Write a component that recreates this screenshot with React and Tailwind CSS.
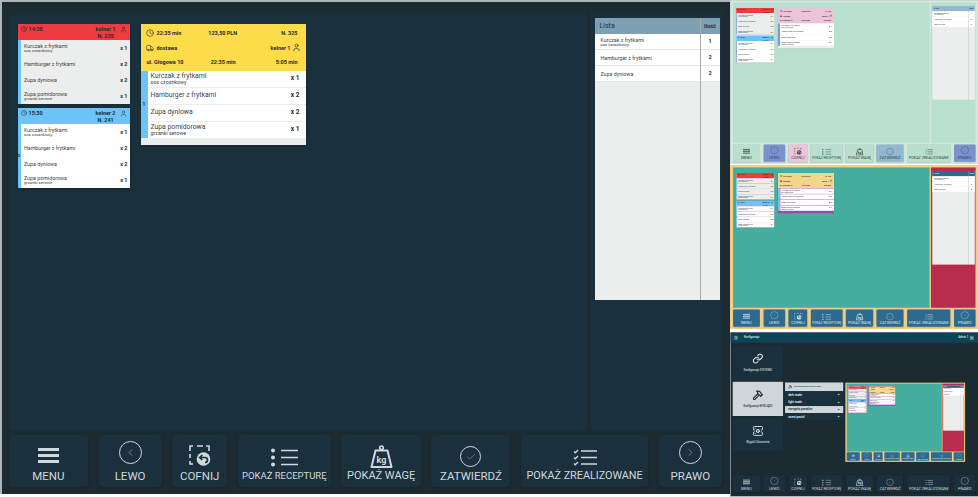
import { Clock, User, Truck, Link, Hammer, ServerCog, Settings, ChevronLeft, ChevronRight, Check } from 'lucide-react';

const darkTheme = {
  root: 'bg-[#1c2a32] border-[#aeb6ba]',
  topStrip: 'bg-[#1c2c35]',
  listStrip: 'bg-[#1c2c35]',
  panel: 'bg-[#1b303d]',
  listPanel: 'bg-[#1b303d]',
  text: 'text-[#d0d9de]',
  undoArrow: '#1b303d',
  btn: ['bg-[#1b303d]', 'bg-[#1b303d]', 'bg-[#1b303d]', 'bg-[#1b303d]', 'bg-[#1b303d]', 'bg-[#1b303d]', 'bg-[#1b303d]', 'bg-[#1b303d]'],
  bigHead: 'bg-[#fddc4a]',
  bigBottom: 'bg-[#eceeed]',
  strip: 'bg-[#6cc3f5]',
  gap: 'bg-[#eceeed]',
  listHead: 'bg-[#7f9fb3] text-[#1f2f38]',
};

const mintTheme = {
  root: 'bg-[#d3e8dd] border-[#c4cfc9]',
  topStrip: 'bg-[#b9e0cf]',
  listStrip: 'bg-[#b9e0cf]',
  panel: 'bg-[#b9e0cf]',
  listPanel: 'bg-[#b9e0cf]',
  text: 'text-[#34454d]',
  undoArrow: '#ecc3d8',
  btn: ['bg-[#b9e0cf]', 'bg-[#7b92cf]', 'bg-[#ecc3d8]', 'bg-[#b9e0cf]', 'bg-[#b9e0cf]', 'bg-[#92b9d0]', 'bg-[#b9e0cf]', 'bg-[#7b92cf]'],
  bigHead: 'bg-[#ecc3d8]',
  bigBottom: 'bg-[#eceeed]',
  strip: 'bg-[#7f9bd0]',
  gap: 'bg-[#eceeed]',
  listHead: 'bg-[#92b9d0] text-[#1f2f38]',
};

const energyTheme = {
  root: 'bg-[#f0cf85] border-[#f0cf85]',
  topStrip: 'bg-[#46ae9f]',
  listStrip: 'bg-[#b82c4e]',
  panel: 'bg-[#46ae9f]',
  listPanel: 'bg-[#b82c4e]',
  text: 'text-[#dbe8ee]',
  undoArrow: '#2c6a8f',
  btn: ['bg-[#2c6a8f]', 'bg-[#2c6a8f]', 'bg-[#2c6a8f]', 'bg-[#2c6a8f]', 'bg-[#2c6a8f]', 'bg-[#2c6a8f]', 'bg-[#2c6a8f]', 'bg-[#2c6a8f]'],
  bigHead: 'bg-[#f4d58a]',
  bigBottom: 'bg-[#a544b8]',
  strip: 'bg-[#6cc3f5]',
  gap: 'bg-[#a544b8]',
  listHead: 'bg-[#2c6a8f] text-[#e5eef2]',
};

const itemsA = [
  { name: 'Kurczak z frytkami', note: 'sos czosnkowy', qty: 'x 1' },
  { name: 'Hamburger z frytkami', qty: 'x 2' },
  { name: 'Zupa dyniowa', qty: 'x 2' },
  { name: 'Zupa pomidorowa', note: 'grzanki serowe', qty: 'x 1' },
];

function MenuIcon() {
  return (
    <svg width="21" height="15" viewBox="0 0 21 15" fill="currentColor">
      <rect y="0" width="21" height="3" />
      <rect y="6" width="21" height="3" />
      <rect y="12" width="21" height="3" />
    </svg>
  );
}

function UndoIcon({ arrow }) {
  return (
    <svg width="22" height="21" viewBox="0 0 22 21" fill="none" stroke="currentColor">
      <path d="M1 6V1h3M8 1h6M17 1h3v5M1 9v4M1 16v3h3" strokeWidth="1.6" />
      <circle cx="14.5" cy="14" r="6.8" fill="currentColor" stroke="none" />
      <path d="M11 12.5h5a2.5 2.5 0 0 1 0 5M13.3 10l-2.6 2.5 2.6 2.5" stroke={arrow} strokeWidth="1.7" />
    </svg>
  );
}

function ListIcon() {
  return (
    <svg width="27" height="19" viewBox="0 0 27 19" fill="none" stroke="currentColor">
      <circle cx="2" cy="2.5" r="2" fill="currentColor" stroke="none" />
      <circle cx="2" cy="9.5" r="2" fill="currentColor" stroke="none" />
      <circle cx="2" cy="16.5" r="2" fill="currentColor" stroke="none" />
      <path d="M10 2.5h17M10 9.5h17M10 16.5h17" strokeWidth="1.4" />
    </svg>
  );
}

function WeightIcon() {
  return (
    <svg width="23" height="23" viewBox="0 0 23 23" fill="none" stroke="currentColor">
      <circle cx="11.5" cy="2.8" r="1.8" strokeWidth="1.6" />
      <path d="M5.5 5.5h12l4 16.5H1.5z" strokeWidth="2" strokeLinejoin="round" />
      <text x="11.5" y="17.5" textAnchor="middle" fontSize="9" fontWeight="700" fill="currentColor" stroke="none" fontFamily="Roboto, sans-serif">kg</text>
    </svg>
  );
}

function CheckListIcon() {
  return (
    <svg width="24" height="17" viewBox="0 0 24 17" fill="none" stroke="currentColor">
      <path d="M1 2.5l1.3 1.3L5 1M1 8.5l1.3 1.3L5 7M1 14.5l1.3 1.3L5 13" strokeWidth="1.3" />
      <path d="M8 2h16M8 8.5h16M8 15h16" strokeWidth="1.5" />
    </svg>
  );
}

function RoundIcon({ size, children }) {
  return (
    <div className={`flex ${size} items-center justify-center rounded-full border border-current`}>
      {children}
    </div>
  );
}

function BottomBar({ theme }) {
  const items = [
    { w: 'w-[79.5px]', pt: 'pt-[13px]', label: 'MENU', size: 'text-[11.5px]', icon: <MenuIcon /> },
    { w: 'w-[63px]', pt: 'pt-[6px]', label: 'LEWO', size: 'text-[11.5px]', icon: <RoundIcon size="h-[23px] w-[23px]"><ChevronLeft size={11} strokeWidth={1} /></RoundIcon> },
    { w: 'w-[55px]', pt: 'pt-[10px]', label: 'COFNIJ', size: 'text-[11.5px]', icon: <UndoIcon arrow={theme.undoArrow} /> },
    { w: 'w-[93px]', pt: 'pt-[13px]', label: 'POKAŻ RECEPTURĘ', size: 'text-[9.5px]', icon: <ListIcon /> },
    { w: 'w-[79.5px]', pt: 'pt-[10px]', label: 'POKAŻ WAGĘ', size: 'text-[11px]', icon: <WeightIcon /> },
    { w: 'w-[79px]', pt: 'pt-[11px]', label: 'ZATWIERDŹ', size: 'text-[11.5px]', icon: <RoundIcon size="h-[21px] w-[21px]"><Check size={10} strokeWidth={1} /></RoundIcon> },
    { w: 'w-[127px]', pt: 'pt-[14px]', label: 'POKAŻ ZREALIZOWANE', size: 'text-[10.8px]', icon: <CheckListIcon /> },
    { w: 'w-[63.5px]', pt: 'pt-[6px]', label: 'PRAWO', size: 'text-[11.5px]', icon: <RoundIcon size="h-[23px] w-[23px]"><ChevronRight size={11} strokeWidth={1} /></RoundIcon> },
  ];
  return (
    <div className={`flex h-[52px] gap-[10.6px] ${theme.text}`}>
      {items.map((b, i) => (
        <div key={b.label} className={`${b.w} ${theme.btn[i]} flex flex-col items-center rounded-sm pb-[4px] shadow-sm`}>
          <div className={`flex h-[34px] justify-center ${b.pt}`}>
            <div>{b.icon}</div>
          </div>
          <div className={`${b.size} leading-[14px] whitespace-nowrap`}>{b.label}</div>
        </div>
      ))}
    </div>
  );
}

function Row({ item, big, bg }) {
  return (
    <div className={`${bg} flex items-center justify-between ${big ? 'h-[16px] pr-[6px] pl-[3px]' : 'h-[15.5px] pr-[2px] pl-[3.5px]'}`}>
      <div className="min-w-0 text-[#3d4448]">
        <div className={big ? 'text-[6.8px] leading-[7.5px]' : 'text-[5.3px] leading-[6px]'}>{item.name}</div>
        {item.note && <div className={big ? 'text-[5.3px] leading-[5.5px]' : 'text-[4.2px] leading-[3.5px]'}>{item.note}</div>}
      </div>
      <div className={`font-bold text-[#26292b] ${big ? 'text-[6.5px]' : 'text-[5.5px]'}`}>{item.qty}</div>
    </div>
  );
}

function SmallCard({ time, head, waiter, number, rowBg, theme, stripLabel }) {
  return (
    <div className="h-[80px] overflow-hidden bg-[#eceeed] shadow">
      <div className={`${head} flex h-[16px] items-start justify-between px-[3px] pt-[2px] text-[5.5px] leading-[6.5px] font-bold text-[#2a2a2a]`}>
        <div className="flex items-center gap-[2px]">
          <Clock size={6} strokeWidth={2} />
          <span>{time}</span>
        </div>
        <div className="flex gap-[4px]">
          <div className="text-center">
            <div>{waiter}</div>
            <div>{number}</div>
          </div>
          <User size={7} strokeWidth={1.6} />
        </div>
      </div>
      <div className="flex">
        <div className={`${theme.strip} flex w-[3px] shrink-0 items-center justify-center text-[4px] font-bold text-[#26292b]`}>{stripLabel}</div>
        <div className={`flex flex-1 flex-col gap-[.5px] ${theme.gap}`}>
          {itemsA.map((it) => (
            <Row key={it.name} item={it} bg={rowBg} />
          ))}
        </div>
      </div>
    </div>
  );
}

function BigCard({ theme }) {
  return (
    <div className={`h-[121px] overflow-hidden shadow ${theme.bigBottom}`}>
      <div className={`${theme.bigHead} flex h-[47px] flex-col justify-between px-[5px] py-[3px] text-[5.5px] leading-[12px] font-bold text-[#2a2a2a]`}>
        <div className="flex items-center justify-between pr-[3px]">
          <div className="flex items-center gap-[3px]"><Clock size={8} strokeWidth={1.8} /><span>22:35 min</span></div>
          <span className="pr-[17px]">123,50 PLN</span>
          <span>N. 325</span>
        </div>
        <div className="flex items-center justify-between">
          <div className="flex items-center gap-[3px]"><Truck size={8} strokeWidth={1.6} /><span>dostawa</span></div>
          <div className="flex items-center gap-[1px]"><span>kelner 1</span><User size={9} strokeWidth={1.8} /></div>
        </div>
        <div className="flex items-center justify-between pr-[3px] pl-[1px]">
          <span>ul. Głogowa 10</span>
          <span className="pr-[13px]">22:35 min</span>
          <span>5:05 min</span>
        </div>
      </div>
      <div className="flex">
        <div className={`${theme.strip} flex h-[67px] w-[7px] shrink-0 items-center justify-center text-[5px] font-bold text-[#26292b]`}>1</div>
        <div className={`flex h-[67px] flex-1 flex-col gap-[1px] ${theme.gap}`}>
          {itemsA.map((it) => (
            <Row key={it.name} item={it} big bg="bg-white" />
          ))}
        </div>
      </div>
    </div>
  );
}

function ListPanel({ theme }) {
  const rows = [
    { name: 'Kurczak z frytkami', note: 'sos czosnkowy', qty: '1' },
    { name: 'Hamburger z frytkami', qty: '2' },
    { name: 'Zupa dyniowa', qty: '2' },
  ];
  return (
    <div className="relative h-[282px] bg-[#eceeed]">
      <div className={`${theme.listHead} flex h-[16px]`}>
        <div className="flex flex-1 items-center pl-[5px] text-[7px]">Lista</div>
        <div className="flex w-[19px] items-center justify-center text-[5.5px] font-bold">Ilość</div>
      </div>
      {rows.map((r) => (
        <div key={r.name} className="flex h-[16px] border-b border-[#e6e8e8] bg-white">
          <div className="flex flex-1 flex-col justify-center pl-[6px] text-[#3d4448]">
            <div className="text-[5.3px] leading-[6px]">{r.name}</div>
            {r.note && <div className="text-[4.2px] leading-[3.5px]">{r.note}</div>}
          </div>
          <div className="flex w-[19px] items-center justify-center text-[5.5px] font-bold text-[#26292b]">{r.qty}</div>
        </div>
      ))}
      <div className="absolute top-0 right-[18.5px] h-[282px] w-[1.5px] bg-[#a3aaae]" />
    </div>
  );
}

function OrdersScreen({ theme }) {
  return (
    <div className={`box-border flex h-[494px] w-[730px] flex-col border-t-2 border-l-2 pt-[6px] pl-[6.5px] ${theme.root}`}>
      <div className="flex h-[422px] gap-[4px]">
        <div className={`${theme.panel} w-[578px]`}>
          <div className={`${theme.topStrip} h-[7px]`} />
          <div className="flex gap-[11px] pt-[9px] pl-[9px]">
            <div className="flex w-[112px] flex-col gap-[4px]">
              <SmallCard time="14:30" head="bg-[#ef3a3f]" waiter="kelner 1" number="N. 235" rowBg="bg-[#eceeed]" theme={theme} />
              <SmallCard time="15:30" head="bg-[#6cc3f5]" waiter="kelner 2" number="N. 241" rowBg="bg-white" theme={theme} stripLabel="2" />
            </div>
            <div className="w-[165px]">
              <BigCard theme={theme} />
            </div>
          </div>
        </div>
        <div className={`${theme.listPanel} w-[131px]`}>
          <div className={`${theme.listStrip} h-[7px]`} />
          <div className="pt-[3px] pr-[2px] pl-[4px]">
            <ListPanel theme={theme} />
          </div>
        </div>
      </div>
      <div className="mt-[5px]">
        <BottomBar theme={theme} />
      </div>
    </div>
  );
}

function NavTile({ icon, label, active, h }) {
  return (
    <div className={`flex ${h} w-[148px] flex-col items-center justify-center gap-[12px] text-[8px] font-medium ${active ? 'bg-[#cfd6da] text-[#26323a]' : 'bg-[#1b303d] text-[#d0d9de]'}`}>
      {icon}
      <span>{label}</span>
    </div>
  );
}

function ConfigScreen() {
  const themes = ['dark mode', 'light mode', 'energetic paradise', 'sweet pastel'];
  return (
    <div className={`box-border flex h-[495px] w-[730px] flex-col border-t-2 border-l-2 ${darkTheme.root}`}>
      <div className="flex h-[30px] items-center justify-between bg-[#0f4257] px-[8px] text-[8px] font-medium text-[#dbe8ee]">
        <div className="flex items-center gap-[16px]">
          <Settings size={15} />
          <span>Konfiguracja</span>
        </div>
        <div className="flex items-center gap-[4px] pr-[4px]">
          <span>Admin 1</span>
          <ServerCog size={13} />
        </div>
      </div>
      <div className="flex h-[399px] pt-[10px] pl-[6px]">
        <div className="flex w-[148px] flex-col gap-[8px]">
          <NavTile h="h-[100px]" icon={<Link size={32} strokeWidth={2.6} />} label="Konfiguracja SYSTEMU" />
          <NavTile h="h-[103px]" active icon={<Hammer size={32} strokeWidth={2.6} />} label="Konfiguracja WYGLĄDU" />
          <NavTile h="h-[98px]" icon={<ServerCog size={32} strokeWidth={2.2} />} label="Wyjątki/Ustawienia" />
        </div>
        <div className="mt-[110px] ml-[6px] w-[171px] text-[8.5px] font-bold">
          <div className="flex h-[26px] items-center gap-[6px] bg-[#cfd6da] pl-[8px] font-normal text-[#26323a]">
            <Hammer size={13} strokeWidth={2.6} />
            <span className="text-[7.5px] font-medium">Konfiguracja WYGLĄDU</span>
          </div>
          {themes.map((t) => (
            <div key={t} className={`mt-[1px] flex h-[21px] items-center justify-between px-[9px] ${t === 'energetic paradise' ? 'bg-[#cfd6da] text-[#26323a]' : 'bg-[#1b303d] text-[#dbe8ee]'}`}>
              <span>{t}</span>
              <span className="text-[7px]">▶</span>
            </div>
          ))}
        </div>
        <div className="mt-[110px] ml-[6px] h-[240px] w-[353px] overflow-hidden">
          <div className="origin-top-left scale-[0.484]">
            <OrdersScreen theme={energyTheme} />
          </div>
        </div>
      </div>
      <div className="pl-[6.5px]">
        <BottomBar theme={darkTheme} />
      </div>
    </div>
  );
}

function Thumb({ children, h }) {
  return (
    <div className={`${h} w-[248px] overflow-hidden`}>
      <div className="origin-top-left scale-x-[0.34] scale-y-[0.332]">{children}</div>
    </div>
  );
}

export default function App() {
  return (
    <div className="flex h-[497px] w-[978px] overflow-hidden bg-white font-['Roboto',sans-serif]">
      <div className="w-[730px]">
        <OrdersScreen theme={darkTheme} />
      </div>
      <div className="flex w-[248px] flex-col">
        <Thumb h="h-[165px]"><OrdersScreen theme={mintTheme} /></Thumb>
        <Thumb h="h-[167px]"><OrdersScreen theme={energyTheme} /></Thumb>
        <Thumb h="h-[165px]"><ConfigScreen /></Thumb>
      </div>
    </div>
  );
}
